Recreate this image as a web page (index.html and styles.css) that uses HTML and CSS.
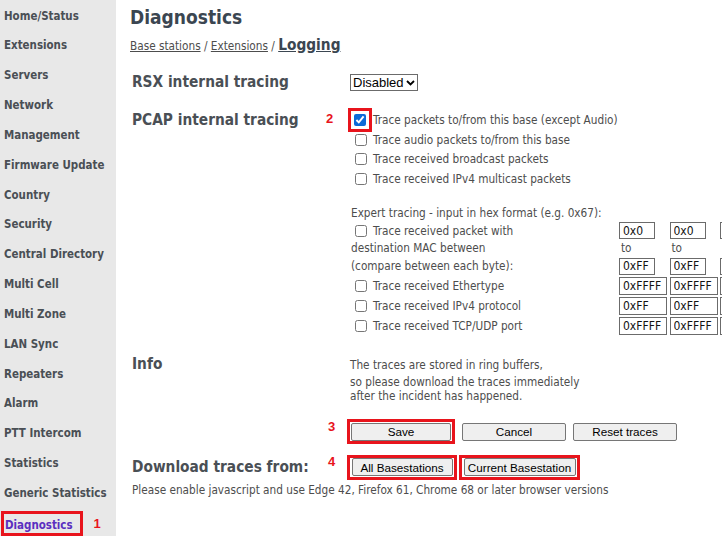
FILE: index.html
```html
<!DOCTYPE html>
<html>
<head>
<meta charset="utf-8">
<link rel="stylesheet" href="styles.css">
</head>
<body>
<div class="page">
  <nav class="side">
    <a class="nav">Home/Status</a>
    <a class="nav">Extensions</a>
    <a class="nav">Servers</a>
    <a class="nav">Network</a>
    <a class="nav">Management</a>
    <a class="nav">Firmware Update</a>
    <a class="nav">Country</a>
    <a class="nav">Security</a>
    <a class="nav">Central Directory</a>
    <a class="nav">Multi Cell</a>
    <a class="nav">Multi Zone</a>
    <a class="nav">LAN Sync</a>
    <a class="nav">Repeaters</a>
    <a class="nav">Alarm</a>
    <a class="nav">PTT Intercom</a>
    <a class="nav">Statistics</a>
    <a class="nav">Generic Statistics</a>
    <div class="nav active"><span class="hl">Diagnostics</span><span class="mark mark-1">1</span></div>
  </nav>
  <main class="main">
    <h1 class="title">Diagnostics</h1>
    <div class="crumbs"><a class="crumb">Base stations</a> / <a class="crumb">Extensions</a> / <a class="crumb cur">Logging</a></div>

    <div class="row rsx">
      <div class="lbl">RSX internal tracing</div>
      <div class="val">
        <span class="select">Disabled<svg class="chev" width="9" height="6" viewBox="0 0 9 6"><path d="M1 1 L4.5 4.5 L8 1" fill="none" stroke="#000" stroke-width="1.8"/></svg></span>
      </div>
    </div>

    <div class="row pcap">
      <div class="lbl">PCAP internal tracing<span class="mark mark-2">2</span></div>
      <div class="val">
        <label class="chk first"><span class="hlbox"><input type="checkbox" checked></span>Trace packets to/from this base (except Audio)</label>
        <label class="chk"><input type="checkbox">Trace audio packets to/from this base</label>
        <label class="chk"><input type="checkbox">Trace received broadcast packets</label>
        <label class="chk"><input type="checkbox">Trace received IPv4 multicast packets</label>

        <div class="expert-title">Expert tracing - input in hex format (e.g. 0x67):</div>
        <div class="expert">
          <label class="chk ex"><input type="checkbox">Trace received packet with</label>
          <span class="cell"><input class="hex" value="0x0"></span>
          <span class="cell"><input class="hex" value="0x0"></span>
          <span class="cell"><input class="hex" value="0x0"></span>

          <div class="ex-txt">destination MAC between</div>
          <span class="cell to">to</span>
          <span class="cell to">to</span>
          <span class="cell to">to</span>

          <div class="ex-txt">(compare between each byte):</div>
          <span class="cell"><input class="hex" value="0xFF"></span>
          <span class="cell"><input class="hex" value="0xFF"></span>
          <span class="cell"><input class="hex" value="0xFF"></span>

          <label class="chk ex"><input type="checkbox">Trace received Ethertype</label>
          <span class="cell"><input class="hex wide" value="0xFFFF"></span>
          <span class="cell"><input class="hex wide" value="0xFFFF"></span>
          <span class="cell"><input class="hex wide" value="0xFFFF"></span>

          <label class="chk ex"><input type="checkbox">Trace received IPv4 protocol</label>
          <span class="cell"><input class="hex wide" value="0xFF"></span>
          <span class="cell"><input class="hex wide" value="0xFF"></span>
          <span class="cell"><input class="hex wide" value="0xFF"></span>

          <label class="chk ex"><input type="checkbox">Trace received TCP/UDP port</label>
          <span class="cell"><input class="hex wide" value="0xFFFF"></span>
          <span class="cell"><input class="hex wide" value="0xFFFF"></span>
          <span class="cell"><input class="hex wide" value="0xFFFF"></span>
        </div>
      </div>
    </div>

    <div class="row info">
      <div class="lbl">Info</div>
      <div class="val info-text">
        <p class="info-p1">The traces are stored in ring buffers,</p>
        <p class="info-p2">so please download the traces immediately<br>after the incident has happened.</p>
      </div>
    </div>

    <div class="row btns">
      <div class="lbl"><span class="mark mark-3">3</span></div>
      <div class="val btn-line">
        <span class="hlbtn"><button class="btn">Save</button></span>
        <button class="btn">Cancel</button>
        <button class="btn">Reset traces</button>
      </div>
    </div>

    <div class="row dl">
      <div class="lbl">Download traces from:<span class="mark mark-4">4</span></div>
      <div class="val dl-line">
        <span class="hlbtn"><button class="btn">All Basestations</button></span>
        <span class="hlbtn"><button class="btn">Current Basestation</button></span>
      </div>
    </div>

    <p class="note">Please enable javascript and use Edge 42, Firefox 61, Chrome 68 or later browser versions</p>
  </main>
</div>
</body>
</html>
```

FILE: styles.css
```css
* { box-sizing: border-box; }
html, body { margin: 0; padding: 0; }
body {
  width: 722px;
  height: 536px;
  overflow: hidden;
  background: #fff;
  font-family: "DejaVu Sans Condensed", "DejaVu Sans", sans-serif;
  color: #4d4d4d;
}
.page {
  display: flex;
  height: 536px;
}
.side {
  width: 116px;
  flex: none;
  background: #e8e8e8;
  padding-top: 1.5px;
}
.nav {
  display: block;
  height: 29.85px;
  line-height: 29.85px;
  padding-left: 4px;
  font-size: 11.45px;
  font-weight: bold;
  color: #4a4f55;
  white-space: nowrap;
}
.nav.active {
  display: flex;
  align-items: center;
  padding-left: 1px;
}
.hl {
  display: inline-block;
  border: 3px solid #e8141c;
  line-height: 18px;
  height: 25px;
  padding: 2px 7px 0 1px;
  color: #5a2fc0;
}
.mark {
  color: #e8141c;
  font-family: "Liberation Sans", Arial, sans-serif;
  font-weight: bold;
  font-size: 13px;
}
.mark-1 { margin-left: 11px; }

.main {
  flex: 1;
  padding-left: 14px;
  min-width: 0;
}
.title {
  margin: 5px 0 0 0;
  font-size: 19px;
  line-height: 24px;
  font-weight: bold;
  color: #3b4651;
}
.crumbs {
  margin-top: 7px;
  font-size: 11.7px;
  color: #4d4d4d;
  height: 18px;
  line-height: 18px;
}
.crumb { color: #4d4d4d; text-decoration: underline; }
.crumb.cur { font-size: 15.3px; font-weight: bold; color: #3b4651; }

.row {
  display: grid;
  grid-template-columns: 220px 1fr;
}
.lbl {
  position: relative;
  padding-left: 2px;
  font-size: 15.3px;
  font-weight: bold;
  color: #4a4f55;
  white-space: nowrap;
}
.val { font-size: 11.7px; }

.rsx { margin-top: 13px; height: 30px; align-items: center; }
.select {
  display: inline-flex;
  align-items: center;
  gap: 2px;
  height: 17px;
  padding: 0 2px 0 2px;
  border: 1px solid #6b6b6b;
  font-family: "Liberation Sans", Arial, sans-serif;
  font-size: 13px;
  color: #000;
}
.chev { margin-top: 1px; }

.pcap .lbl { line-height: 20px; padding-top: 13px; }
.mark-2 { position: absolute; left: 196px; top: 13px; line-height: 18px; }

.chk {
  display: flex;
  align-items: center;
  height: 19.6px;
  color: #4d4d4d;
  white-space: nowrap;
}
.chk input {
  width: 12px;
  height: 12px;
  margin: 0 6px 0 5px;
  accent-color: #0b6ad8;
}
.chk.first { height: 20px; margin-top: 13px; }
.hlbox {
  display: inline-flex;
  align-items: center;
  justify-content: center;
  flex: none;
  width: 24px;
  height: 24px;
  margin: -2px 1px -2px -2px;
  border: 3px solid #e8141c;
}
.hlbox input { margin: 0; }

.expert-title { margin-top: 15px; margin-left: 1px; height: 18px; line-height: 18px; color: #4d4d4d; }
.expert {
  display: grid;
  grid-template-columns: 269px 50.5px 50.5px 50.5px;
  grid-template-rows: 18px 17px 19px 20px 20px 20px;
  color: #4d4d4d;
}
.expert .chk.ex { height: auto; }
.ex-txt { margin-left: 1px; white-space: nowrap; display: flex; align-items: center; }
.cell { display: flex; align-items: center; }
.cell.to { padding-left: 2px; }
.hex {
  width: 36px;
  height: 17px;
  border: 1px solid #6b6b6b;
  padding: 0 3px;
  font-family: "DejaVu Sans Condensed", "DejaVu Sans", sans-serif;
  font-size: 12px;
  color: #111;
  background: #fff;
  border-radius: 0;
}
.hex.wide { width: 48px; height: 18px; }

.info { margin-top: 20px; }
.info .lbl { line-height: 16px; }
.info-text p { margin: 0; color: #4d4d4d; }
.info-p1 { line-height: 18px; }
.info-p2 { line-height: 14px; margin-top: 1px !important; }

.btns { margin-top: 16px; height: 26px; }
.mark-3 { position: absolute; left: 198px; top: 0px; }
.btn-line { display: flex; align-items: center; gap: 7px; margin-left: -3px; }
.btn {
  width: 100px;
  height: 18px;
  padding: 0;
  background: #efefef;
  border: 1px solid #767676;
  border-radius: 2px;
  font-family: "Liberation Sans", Arial, sans-serif;
  font-size: 11.7px;
  color: #000;
  white-space: nowrap;
}
.btn-line > .btn { width: 104px; }
.hlbtn {
  display: inline-flex;
  align-items: center;
  justify-content: center;
  padding: 0 1px;
  height: 25px;
  border: 3px solid #e8141c;
}

.dl { margin-top: 10px; height: 25px; align-items: center; }
.mark-4 { position: absolute; left: 198px; top: -4px; }
.dl-line { display: flex; gap: 2px; margin-left: -3px; }
.dl-line .hlbtn { padding: 0 1.5px; }
.dl-line .hlbtn:first-child .btn { width: 101px; }
.dl-line .hlbtn:last-child .btn { width: 112px; }

.note {
  margin: 3px 0 0 2px;
  font-size: 11.7px;
  color: #4d4d4d;
  white-space: nowrap;
}
```
